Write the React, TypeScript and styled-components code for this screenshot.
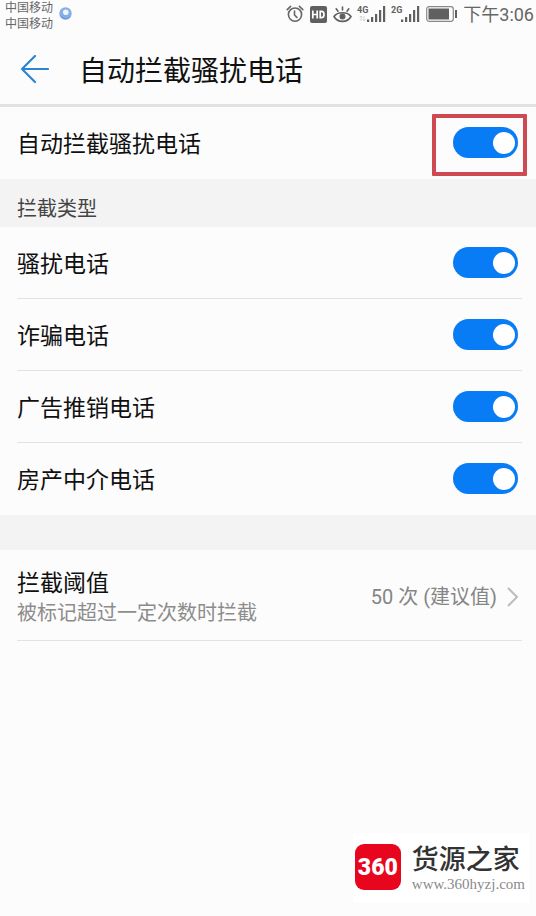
import React, { useId, useState } from "react";
import styled, { createGlobalStyle } from "styled-components";

const GlobalStyle = createGlobalStyle`
  * { box-sizing: border-box; }
  body {
    margin: 0;
    background: #fcfcfc;
    color: #101010;
    font-family: Roboto, "Noto Sans CJK SC", sans-serif;
  }
`;

const Page = styled.div`
  min-height: 100vh;
  display: flex;
  flex-direction: column;
`;

const StatusBar = styled.div`
  height: 32px;
  display: flex;
  justify-content: space-between;
  align-items: flex-start;
  padding: 0 2px 0 5px;
  color: #666;
`;

const Carriers = styled.div`
  display: flex;
  gap: 6px;
  font-size: 12px;
  line-height: 16px;

  svg { margin-top: 7px; }
`;

const CarrierNames = styled.div`
  display: flex;
  flex-direction: column;
`;

const StatusIcons = styled.div`
  height: 28px;
  display: flex;
  align-items: center;
  gap: 6px;
`;

const Clock = styled.span`
  padding-top: 2px;
  font-size: 18px;
  line-height: 28px;
`;

const Header = styled.header`
  height: 75px;
  display: flex;
  align-items: center;
  gap: 30px;
  padding: 2px 16px 0 20px;
  border-bottom: 3px solid #e2e2e2;
`;

const BackButton = styled.button`
  display: flex;
  padding: 0;
  border: 0;
  background: none;
  cursor: pointer;
`;

const Title = styled.h1`
  margin: 0;
  padding-top: 6px;
  font-size: 28px;
  font-weight: 400;
  line-height: 40px;
`;

const Row = styled.div<{ $last?: boolean }>`
  height: 72px;
  display: flex;
  align-items: center;
  justify-content: space-between;
  margin: 0 14px 0 17px;
  padding-right: 4px;
  border-bottom: 1px solid ${(p) => (p.$last ? "transparent" : "#e2e2e2")};
`;

const RowLabel = styled.label`
  padding-top: 4px;
  font-size: 23px;
  line-height: 32px;
`;

const SwitchBox = styled.span<{ $marked?: boolean }>`
  position: relative;
  display: flex;

  &::after {
    content: "";
    display: ${(p) => (p.$marked ? "block" : "none")};
    position: absolute;
    inset: -13px -9px -18px -21px;
    border: 4px solid #cf4a50;
    border-radius: 1px;
    pointer-events: none;
  }
`;

const Switch = styled.input`
  appearance: none;
  width: 65px;
  height: 31px;
  margin: 0;
  padding: 3px;
  display: flex;
  align-items: center;
  border-radius: 16px;
  background: #b8b8b8;
  cursor: pointer;

  &::before {
    content: "";
    width: 22px;
    height: 22px;
    border-radius: 50%;
    background: #fff;
  }

  &:checked {
    justify-content: flex-end;
    background: #087cf5;
  }
`;

const SectionTitle = styled.h2`
  margin: 0;
  padding: 6px 17px 0;
  height: 48px;
  background: #f3f3f3;
  color: #444;
  font-size: 20px;
  font-weight: 400;
  line-height: 48px;
`;

const Divider = styled.div`
  height: 35px;
  background: #f3f3f3;
`;

const ThresholdArea = styled.div`
  display: grid;
  padding: 0 14px 0 17px;
`;

const ThresholdButton = styled.button`
  min-height: 91px;
  padding: 4px 3px 0 0;
  display: flex;
  align-items: center;
  justify-content: space-between;
  border: 0;
  border-bottom: 1px solid #e2e2e2;
  background: none;
  color: inherit;
  font-family: inherit;
  text-align: left;
  cursor: pointer;
`;

const ThresholdText = styled.span`
  display: flex;
  flex-direction: column;
`;

const ThresholdName = styled.span`
  padding-top: 2px;
  font-size: 23px;
  line-height: 30px;
`;

const ThresholdHint = styled.span`
  color: #8c8c8c;
  font-size: 20px;
  line-height: 28px;
`;

const ThresholdValue = styled.span`
  display: flex;
  align-items: center;
  gap: 10px;
  color: #858585;
  font-size: 20px;
  line-height: 28px;
`;

const Brand = styled.footer`
  align-self: flex-end;
  margin: auto 7px 13px 0;
  padding: 0 4px 2px 2px;
  height: 70px;
  display: flex;
  align-items: center;
  gap: 11px;
  background: #fff;
`;

const BrandMark = styled.span`
  width: 46px;
  height: 46px;
  border-radius: 9px;
  display: flex;
  align-items: center;
  justify-content: center;
  background: #e8061f;
  color: #fff;
  font-family: Roboto, sans-serif;
  font-size: 23px;
  font-weight: 900;
`;

const BrandText = styled.span`
  display: flex;
  flex-direction: column;
  padding-top: 2px;
`;

const BrandName = styled.span`
  color: #333;
  font-size: 27px;
  font-weight: 500;
  line-height: 32px;
`;

const BrandLink = styled.a`
  color: #8a8a8a;
  font-family: "Liberation Serif", serif;
  font-size: 15px;
  line-height: 16px;
  text-decoration: none;
`;

function GlobeIcon() {
  return (
    <svg width="13" height="13" viewBox="0 0 13 13" aria-hidden="true">
      <circle cx="6.5" cy="6.5" r="6.2" fill="#86aee6" />
      <path d="M1 8a6 6 0 0 0 11 1 7 7 0 0 1-11-1z" fill="#6a93dc" />
      <circle cx="6.8" cy="5.2" r="2.8" fill="#eef5ff" />
    </svg>
  );
}

function AlarmIcon() {
  return (
    <svg width="18" height="18" viewBox="0 0 18 18" fill="none" stroke="#666" strokeWidth="1.6" strokeLinecap="round" aria-hidden="true">
      <circle cx="9" cy="9.6" r="6.6" />
      <path d="M1.2 4.6 4.6 1.4M16.8 4.6l-3.4-3.2M8.5 6v4l2.4 2.4" />
    </svg>
  );
}

function HdIcon() {
  return (
    <svg width="17" height="17" viewBox="0 0 17 17" aria-hidden="true">
      <rect width="17" height="17" rx="2" fill="#606060" />
      <path d="M2.8 4.5v8M7.2 4.5v8M2.8 8.5h4.4M10.2 5.3v6.4h1.3c1.7 0 2.5-1.1 2.5-3.2s-.8-3.2-2.5-3.2z" fill="none" stroke="#fff" strokeWidth="1.7" />
    </svg>
  );
}

function EyeIcon() {
  return (
    <svg width="19" height="17" viewBox="0 0 19 17" fill="none" stroke="#606060" strokeWidth="1.6" strokeLinecap="round" aria-hidden="true">
      <path d="M1 10.5C4.5 5.500 14.500 5.500 18 10.500 14.500 17 4.500 17 1 10.500z" />
      <path d="M9.5 1v3M3.2 2.8l1.8 2.4M15.8 2.8l-1.800 2.400" />
      <circle cx="9.5" cy="10.6" r="2.2" fill="#606060" />
    </svg>
  );
}

function SignalIcon({ network, data }: { network: string; data?: boolean }) {
  return (
    <svg width="28" height="20" viewBox="0 0 28 20" role="img" aria-label={network} overflow="visible">
      <text x="-1" y="9" fontFamily="Roboto, sans-serif" fontSize="9" fontWeight="700" fill="#606060">{network}</text>
      {data && <path d="M3 17v-5M1.5 13.5 3 12l1.5 1.5M6 12v5M4.5 15.5 6 17l1.5-1.5" fill="none" stroke="#d4d4d4" />}
      <path d="M9 15.5h2.2V18H9zM13 13h2.2v5H13zM17 10h2.2v8H17zM21 6h2.2v12H21zM25 2h2.2v16H25z" fill="#606060" />
    </svg>
  );
}

function BatteryIcon() {
  return (
    <svg width="31" height="16" viewBox="0 0 31 16" aria-hidden="true">
      <rect x=".7" y=".7" width="26.6" height="14.6" rx="2.5" fill="none" stroke="#888" strokeWidth="1.2" />
      <rect x="2.5" y="2.5" width="20.5" height="11" fill="#606060" />
      <rect x="29" y="4" width="2" height="8" fill="#606060" />
    </svg>
  );
}

function BackIcon() {
  return (
    <svg width="29" height="28" viewBox="0 0 29 28" fill="none" stroke="#2a86d3" strokeWidth="2.2" strokeLinecap="round" strokeLinejoin="round" aria-hidden="true">
      <path d="M28 14H2M15 1 2 14l13 13" />
    </svg>
  );
}

function ChevronIcon() {
  return (
    <svg width="12" height="20" viewBox="0 0 12 20" fill="none" stroke="#bcbcbc" strokeWidth="2" aria-hidden="true">
      <path d="m1 1 9 9-9 9" />
    </svg>
  );
}

function SwitchRow({ label, marked, last }: { label: string; marked?: boolean; last?: boolean }) {
  const id = useId();
  const [on, setOn] = useState(true);
  return (
    <Row $last={last}>
      <RowLabel htmlFor={id}>{label}</RowLabel>
      <SwitchBox $marked={marked}>
        <Switch id={id} type="checkbox" role="switch" checked={on} onChange={(e) => setOn(e.target.checked)} />
      </SwitchBox>
    </Row>
  );
}

const blockedTypes = ["骚扰电话", "诈骗电话", "广告推销电话", "房产中介电话"];

export default function App() {
  return (
    <Page>
      <GlobalStyle />
      <StatusBar>
        <Carriers>
          <CarrierNames>
            <span>中国移动</span>
            <span>中国移动</span>
          </CarrierNames>
          <GlobeIcon />
        </Carriers>
        <StatusIcons>
          <AlarmIcon />
          <HdIcon />
          <EyeIcon />
          <SignalIcon network="4G" data />
          <SignalIcon network="2G" />
          <BatteryIcon />
          <Clock>下午3:06</Clock>
        </StatusIcons>
      </StatusBar>
      <Header>
        <BackButton aria-label="返回">
          <BackIcon />
        </BackButton>
        <Title>自动拦截骚扰电话</Title>
      </Header>
      <main>
        <SwitchRow label="自动拦截骚扰电话" marked last />
        <SectionTitle>拦截类型</SectionTitle>
        {blockedTypes.map((type, i) => (
          <SwitchRow key={type} label={type} last={i === blockedTypes.length - 1} />
        ))}
        <Divider />
        <ThresholdArea>
          <ThresholdButton>
            <ThresholdText>
              <ThresholdName>拦截阈值</ThresholdName>
              <ThresholdHint>被标记超过一定次数时拦截</ThresholdHint>
            </ThresholdText>
            <ThresholdValue>
              50 次 (建议值)
              <ChevronIcon />
            </ThresholdValue>
          </ThresholdButton>
        </ThresholdArea>
      </main>
      <Brand>
        <BrandMark>360</BrandMark>
        <BrandText>
          <BrandName>货源之家</BrandName>
          <BrandLink href="#">www.360hyzj.com</BrandLink>
        </BrandText>
      </Brand>
    </Page>
  );
}
